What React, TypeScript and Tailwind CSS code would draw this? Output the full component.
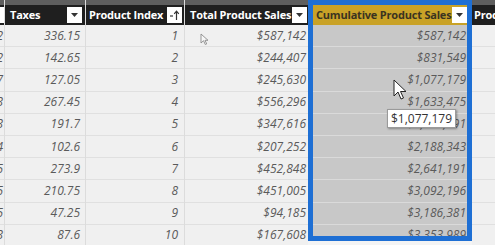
import React from "react";

const taxes = ["336.15", "142.65", "127.05", "267.45", "191.7", "102.6", "273.9", "210.75", "47.25", "87.6"];
const sales = ["$587,142", "$244,407", "$245,630", "$556,296", "$347,616", "$207,252", "$452,848", "$451,005", "$94,185", "$167,608"];
const cumulative = ["$587,142", "$831,549", "$1,077,179", "$1,633,475", "$1,981,091", "$2,188,343", "$2,641,191", "$3,092,196", "$3,186,381", "$3,353,989"];
const leftEdge = ["2", "2", "7", "3", "3", "4", "5", "5", "5", "3"];

const Dropdown = () => (
  <div className="flex h-[16px] w-[15px] items-center justify-center bg-white">
    <svg width="7" height="4" viewBox="0 0 7 4">
      <path d="M0 0h7L3.5 4z" fill="#333" />
    </svg>
  </div>
);

const SortIcon = () => (
  <div className="flex h-[16px] w-[15px] items-center justify-center bg-white">
    <svg width="11" height="11" viewBox="0 0 11 11">
      <path d="M1 6h3" stroke="#333" strokeWidth="1.2" />
      <path d="M7.5 10V1.5M5.2 3.8l2.3-2.6 2.3 2.6" stroke="#333" strokeWidth="1.2" fill="none" />
    </svg>
  </div>
);

interface ColumnProps {
  width: string;
  header: React.ReactNode;
  values: string[];
  align?: string;
  divider?: boolean;
}

const Column: React.FC<ColumnProps> = ({ width, header, values, align = "justify-end pr-[5px]", divider = true }) => (
  <div className={`flex shrink-0 flex-col overflow-hidden ${width} ${divider ? "border-r border-[#dcdcdc]" : ""}`}>
    <div className="h-[5px] bg-[#5e5e5e]" />
    <div className="flex h-[20px] items-center bg-[#1f1f1f]">{header}</div>
    {values.map((v, i) => (
      <div
        key={i}
        className={`flex h-[22.2px] shrink-0 items-center border-b border-[#e0e0e0] bg-[#f0f0f0] ${align}`}
      >
        <span className="text-[12px] italic text-[#5a5a5a]">{v}</span>
      </div>
    ))}
  </div>
);

const headText = "text-[11px] font-bold tracking-[-0.2px] text-white whitespace-nowrap";

export default function App() {
  return (
    <div
      className="relative h-[245px] w-[495px] overflow-hidden bg-[#f4f4f4]"
      style={{ fontFamily: '"Open Sans", "Noto Sans", sans-serif' }}
    >
      <div className="flex">
        <Column
          width="w-[5px]"
          header={<div className="ml-[-11px] h-[16px] w-[15px] bg-white" />}
          values={leftEdge}
          align="justify-end pr-[1px]"
        />
        <Column
          width="w-[81px]"
          header={
            <div className="flex w-full items-center justify-between pl-[5px] pr-[3px]">
              <span className={headText}>Taxes</span>
              <Dropdown />
            </div>
          }
          values={taxes}
        />
        <Column
          width="w-[99px]"
          header={
            <div className="flex w-full items-center justify-between pl-[3px] pr-[2px]">
              <span className={headText}>Product Index</span>
              <SortIcon />
            </div>
          }
          values={taxes.map((_, i) => String(i + 1))}
          align="justify-end pr-[6px]"
        />
        <Column
          width="w-[123px]"
          header={
            <div className="flex w-full items-center justify-between pl-[5px] pr-[1px]">
              <span className={headText}>Total Product Sales</span>
              <Dropdown />
            </div>
          }
          values={sales}
          align="justify-end pr-[2px]"
          divider={false}
        />

        {/* selected column */}
        <div className="flex h-[241px] w-[164px] shrink-0 flex-col overflow-hidden border-[5px] border-[#1e6fd4]">
          <div className="flex h-[20px] shrink-0 items-center justify-between bg-[#c9a227] pl-[3px]">
            <span className="whitespace-nowrap text-[11px] font-bold tracking-[-0.2px] text-[#3a3320]">
              Cumulative Product Sales
            </span>
            <Dropdown />
          </div>
          {cumulative.map((v, i) => (
            <div
              key={i}
              className="flex h-[22.2px] shrink-0 items-center justify-end border-b border-[#dadada] bg-[#c8c8c8] pr-[1px]"
            >
              <span className="text-[12px] italic text-[#5a5a5a]">{v}</span>
            </div>
          ))}
        </div>

        <Column
          width="w-[30px]"
          header={<span className={`${headText} pl-[2px]`}>Product</span>}
          values={taxes.map(() => "")}
          divider={false}
        />
      </div>

      {/* tooltip */}
      <div className="absolute left-[387px] top-[109px] flex h-[19px] w-[69px] items-center justify-center border border-[#9a9a9a] bg-white shadow-[1px_1px_2px_rgba(0,0,0,0.35)]">
        <span className="text-[12px] text-[#333]">$1,077,179</span>
      </div>

      {/* mouse cursor over selected column */}
      <svg className="absolute left-[393px] top-[79px]" width="14" height="21" viewBox="0 0 14 21">
        <path d="M1 1v16l4-4 3 7 2.5-1-3-6.5H13z" fill="#fff" stroke="#222" strokeWidth="1" strokeLinejoin="round" />
      </svg>

      {/* faint cursor */}
      <svg className="absolute left-[200px] top-[33px]" width="9" height="12" viewBox="0 0 9 12">
        <path d="M1 1v9l2.5-2.3 1.8 3.8 1.4-.6-1.7-3.6H8z" fill="#f7f7f7" stroke="#8a8a8a" strokeWidth="0.9" strokeLinejoin="round" />
      </svg>
    </div>
  );
}
